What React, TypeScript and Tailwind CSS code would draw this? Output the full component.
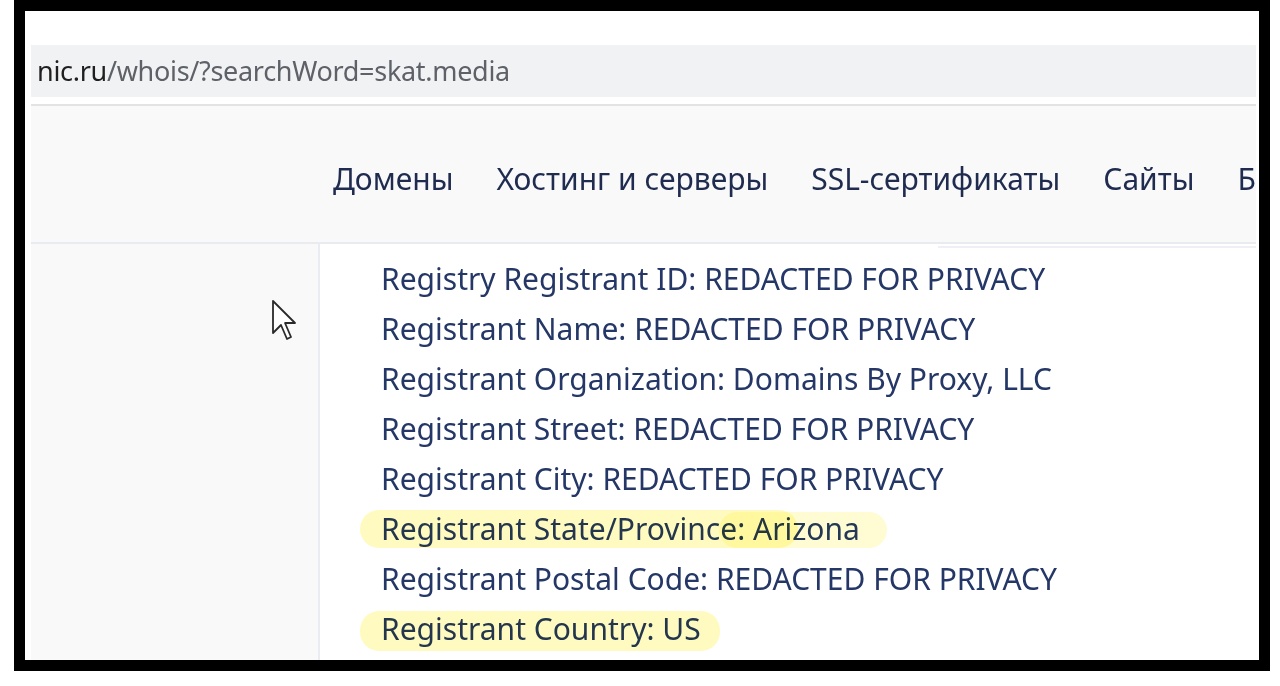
import React from "react";

type Stroke = { l: number; w: number; t: number; h: number; c: string };

const rows: { text: string; hl?: Stroke[] }[] = [
  { text: "Registry Registrant ID: REDACTED FOR PRIVACY" },
  { text: "Registrant Name: REDACTED FOR PRIVACY" },
  { text: "Registrant Organization: Domains By Proxy, LLC" },
  { text: "Registrant Street: REDACTED FOR PRIVACY" },
  { text: "Registrant City: REDACTED FOR PRIVACY" },
  {
    text: "Registrant State/Province: Arizona",
    hl: [
      { l: -21, w: 438, t: 7, h: 38, c: "#fffbc0" },
      { l: 338, w: 168, t: 9, h: 36, c: "#fffcd4" },
    ],
  },
  { text: "Registrant Postal Code: REDACTED FOR PRIVACY" },
  { text: "Registrant Country: US", hl: [{ l: -21, w: 360, t: 8, h: 40, c: "#fffbc0" }] },
];

const nav = ["Домены", "Хостинг и серверы", "SSL-сертификаты", "Сайты", "Б"];

function Cursor() {
  return (
    <svg width="28" height="42" viewBox="0 0 14 21" className="absolute left-[271px] top-[299px]">
      <path
        d="M1 1 L1 17 L5 13 L8 20 L10 19 L7 12 L12 12 Z"
        fill="white"
        stroke="#2a2a2a"
        strokeWidth="0.9"
        strokeLinejoin="round"
      />
    </svg>
  );
}

export default function App() {
  return (
    <div
      className="relative w-[1280px] h-[686px] bg-white overflow-hidden"
      style={{ fontFamily: '"Noto Sans", "Open Sans", sans-serif' }}
    >
      <div className="ml-[14px] w-[1256px] h-[671px] border-[11px] border-black bg-white flex flex-col overflow-hidden">
        <div className="flex flex-col pl-[6px] pr-[3px] pt-[34px] h-full">
          {/* URL bar */}
          <div className="h-[52px] bg-[#f1f2f4] flex items-center pl-[6px] text-[27px] tracking-[-0.3px] whitespace-nowrap">
            <span className="text-[#1f1f1f]">nic.ru</span>
            <span className="text-[#5e6168]">/whois/?searchWord=skat.media</span>
          </div>
          <div className="h-[7px] bg-white" />
          <div className="h-[2px] bg-[#e2e3e5]" />
          {/* nav */}
          <div className="h-[136px] bg-[#f9f9f9] flex items-center pl-[302px] gap-[43px] overflow-hidden whitespace-nowrap text-[30px] text-[#1f2b4f] pt-[9px]">
            {nav.map((n) => (
              <span key={n}>{n}</span>
            ))}
          </div>
          <div className="h-[2px] bg-[#e9ebf1]" />
          {/* body */}
          <div className="flex flex-1 min-h-0">
            <div className="w-[289px] bg-[#f9f9f9] border-r-2 border-[#ebecf1]" />
            <div className="flex-1 bg-white flex flex-col">
              <div className="h-[2px] mt-[2px] ml-[618px] bg-[#eef0f5]" />
              <div className="flex flex-col pl-[61px] pt-[5px]">
                {rows.map((r) => (
                  <div key={r.text} className="relative h-[50px] flex items-center whitespace-nowrap text-[30px] text-[#243766]">
                    <span>{r.text}</span>
                    {r.hl
                      ? r.hl.map((s, i) => (
                          <div
                            key={i}
                            className="absolute rounded-[19px] mix-blend-multiply"
                            style={{ left: s.l, width: s.w, top: s.t, height: s.h, backgroundColor: s.c }}
                          />
                        ))
                      : null}
                  </div>
                ))}
              </div>
            </div>
          </div>
        </div>
      </div>
      <Cursor />
    </div>
  );
}
